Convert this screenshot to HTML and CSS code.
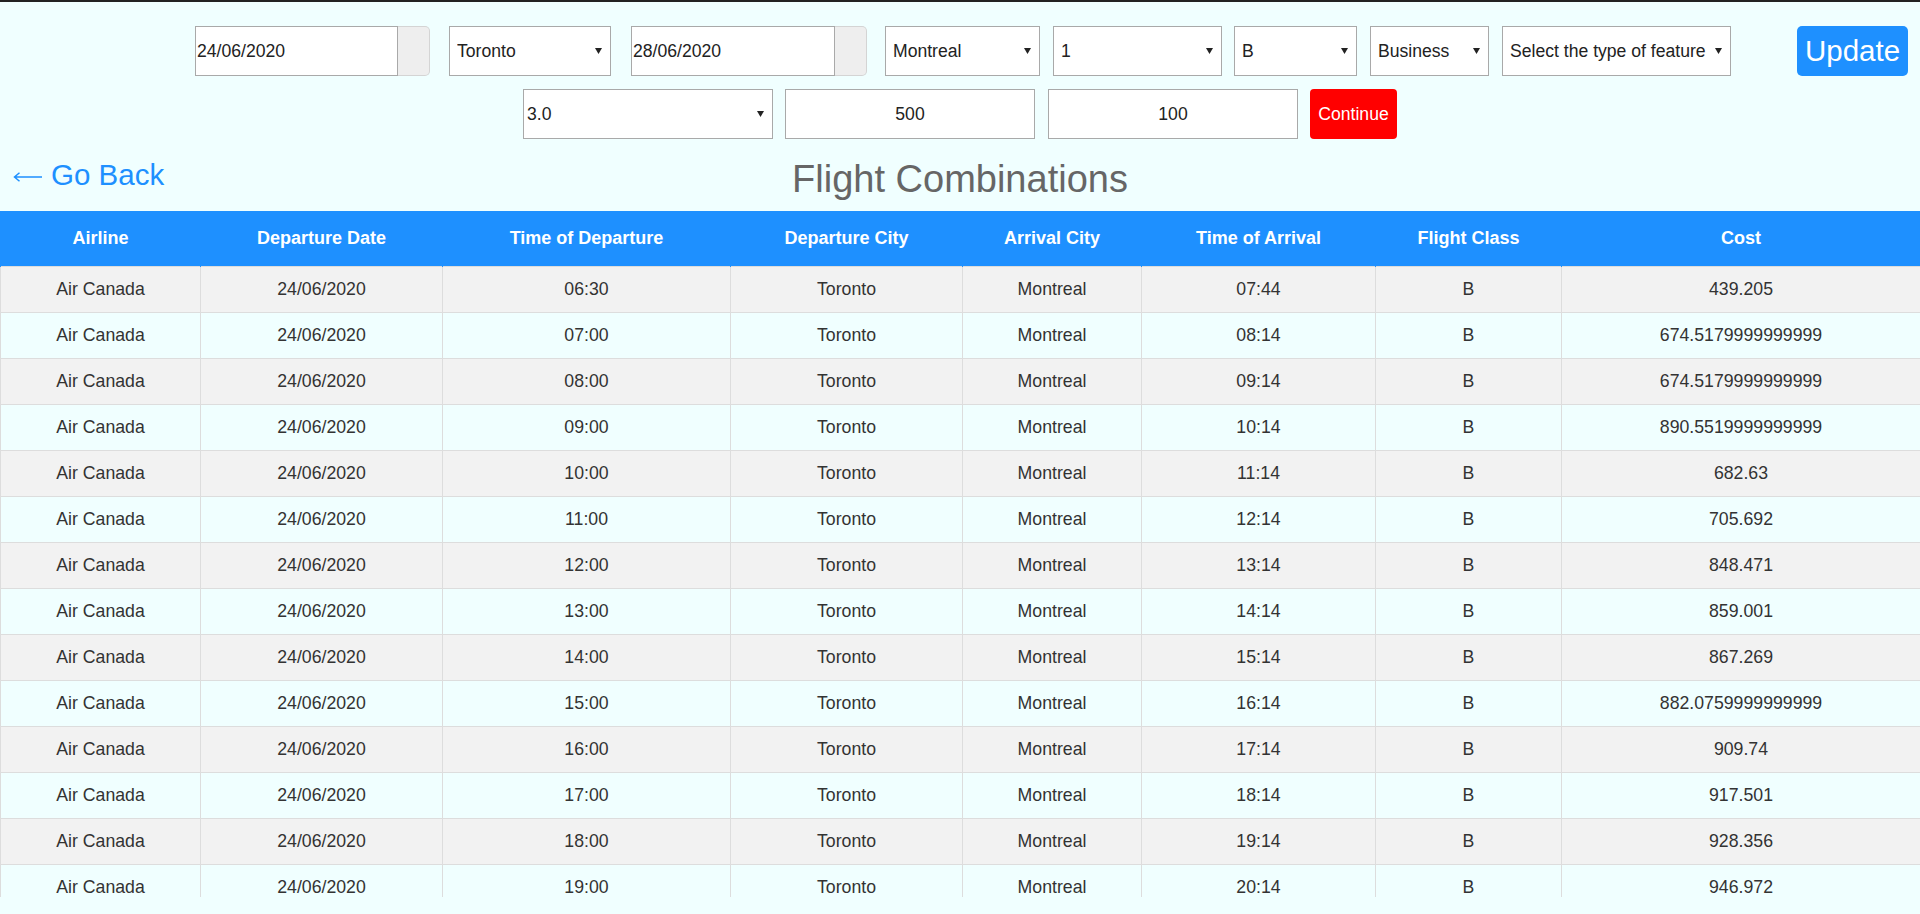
FILE: index.html
```html
<!DOCTYPE html>
<html lang="en">
<head>
<meta charset="utf-8">
<title>Flight Combinations</title>
<link rel="stylesheet" href="styles.css">
</head>
<body>
<div class="page">
  <form class="search">
    <div class="row row1">
      <div class="date-group w-date1">
        <input class="date-input" type="text" value="24/06/2020">
        <span class="addon"></span>
      </div>
      <div class="sel-wrap w-from">
        <select class="sel"><option>Toronto</option></select>
        <svg class="arrow" width="7" height="6" viewBox="0 0 7 6"><polygon points="0,0 7,0 3.5,6" fill="#222"/></svg>
      </div>
      <div class="date-group w-date2">
        <input class="date-input" type="text" value="28/06/2020">
        <span class="addon"></span>
      </div>
      <div class="sel-wrap w-to">
        <select class="sel"><option>Montreal</option></select>
        <svg class="arrow" width="7" height="6" viewBox="0 0 7 6"><polygon points="0,0 7,0 3.5,6" fill="#222"/></svg>
      </div>
      <div class="sel-wrap w-pax">
        <select class="sel"><option>1</option></select>
        <svg class="arrow" width="7" height="6" viewBox="0 0 7 6"><polygon points="0,0 7,0 3.5,6" fill="#222"/></svg>
      </div>
      <div class="sel-wrap w-code">
        <select class="sel"><option>B</option></select>
        <svg class="arrow" width="7" height="6" viewBox="0 0 7 6"><polygon points="0,0 7,0 3.5,6" fill="#222"/></svg>
      </div>
      <div class="sel-wrap w-class">
        <select class="sel"><option>Business</option></select>
        <svg class="arrow" width="7" height="6" viewBox="0 0 7 6"><polygon points="0,0 7,0 3.5,6" fill="#222"/></svg>
      </div>
      <div class="sel-wrap w-feature">
        <select class="sel"><option>Select the type of feature</option></select>
        <svg class="arrow" width="7" height="6" viewBox="0 0 7 6"><polygon points="0,0 7,0 3.5,6" fill="#222"/></svg>
      </div>
      <button class="btn-update" type="button">Update</button>
    </div>
    <div class="row row2">
      <div class="sel-wrap w-rating">
        <select class="sel sel-tight"><option>3.0</option></select>
        <svg class="arrow" width="7" height="6" viewBox="0 0 7 6"><polygon points="0,0 7,0 3.5,6" fill="#222"/></svg>
      </div>
      <input class="num-input w-num1" type="text" value="500">
      <input class="num-input w-num2" type="text" value="100">
      <button class="btn-continue" type="button">Continue</button>
    </div>
  </form>

  <div class="title-bar">
    <a class="go-back" href="#"><svg class="back-arrow" width="29" height="10" viewBox="0 0 29 10"><path d="M1.5 5 H29 M6.5 0.8 L1.5 5 L6.5 9.2" fill="none" stroke="#1e90ff" stroke-width="1.5"/></svg>Go Back</a>
    <h1 class="title">Flight Combinations</h1>
    <span class="spacer"></span>
  </div>

  <div class="table-wrap">
    <table class="flights">
      <thead>
        <tr>
          <th class="c1">Airline</th>
          <th class="c2">Departure Date</th>
          <th class="c3">Time of Departure</th>
          <th class="c4">Departure City</th>
          <th class="c5">Arrival City</th>
          <th class="c6">Time of Arrival</th>
          <th class="c7">Flight Class</th>
          <th class="c8">Cost</th>
        </tr>
      </thead>
      <tbody>
        <tr><td>Air Canada</td><td>24/06/2020</td><td>06:30</td><td>Toronto</td><td>Montreal</td><td>07:44</td><td>B</td><td>439.205</td></tr>
        <tr><td>Air Canada</td><td>24/06/2020</td><td>07:00</td><td>Toronto</td><td>Montreal</td><td>08:14</td><td>B</td><td>674.5179999999999</td></tr>
        <tr><td>Air Canada</td><td>24/06/2020</td><td>08:00</td><td>Toronto</td><td>Montreal</td><td>09:14</td><td>B</td><td>674.5179999999999</td></tr>
        <tr><td>Air Canada</td><td>24/06/2020</td><td>09:00</td><td>Toronto</td><td>Montreal</td><td>10:14</td><td>B</td><td>890.5519999999999</td></tr>
        <tr><td>Air Canada</td><td>24/06/2020</td><td>10:00</td><td>Toronto</td><td>Montreal</td><td>11:14</td><td>B</td><td>682.63</td></tr>
        <tr><td>Air Canada</td><td>24/06/2020</td><td>11:00</td><td>Toronto</td><td>Montreal</td><td>12:14</td><td>B</td><td>705.692</td></tr>
        <tr><td>Air Canada</td><td>24/06/2020</td><td>12:00</td><td>Toronto</td><td>Montreal</td><td>13:14</td><td>B</td><td>848.471</td></tr>
        <tr><td>Air Canada</td><td>24/06/2020</td><td>13:00</td><td>Toronto</td><td>Montreal</td><td>14:14</td><td>B</td><td>859.001</td></tr>
        <tr><td>Air Canada</td><td>24/06/2020</td><td>14:00</td><td>Toronto</td><td>Montreal</td><td>15:14</td><td>B</td><td>867.269</td></tr>
        <tr><td>Air Canada</td><td>24/06/2020</td><td>15:00</td><td>Toronto</td><td>Montreal</td><td>16:14</td><td>B</td><td>882.0759999999999</td></tr>
        <tr><td>Air Canada</td><td>24/06/2020</td><td>16:00</td><td>Toronto</td><td>Montreal</td><td>17:14</td><td>B</td><td>909.74</td></tr>
        <tr><td>Air Canada</td><td>24/06/2020</td><td>17:00</td><td>Toronto</td><td>Montreal</td><td>18:14</td><td>B</td><td>917.501</td></tr>
        <tr><td>Air Canada</td><td>24/06/2020</td><td>18:00</td><td>Toronto</td><td>Montreal</td><td>19:14</td><td>B</td><td>928.356</td></tr>
        <tr><td>Air Canada</td><td>24/06/2020</td><td>19:00</td><td>Toronto</td><td>Montreal</td><td>20:14</td><td>B</td><td>946.972</td></tr>
      </tbody>
    </table>
  </div>
</div>
</body>
</html>
```

FILE: styles.css
```css
* { box-sizing: border-box; }

html, body {
  margin: 0;
  padding: 0;
  height: 100%;
  overflow: hidden;
}

body {
  background: #f0ffff;
  font-family: "Liberation Sans", Arial, sans-serif;
  color: #222;
  border-top: 2px solid #222;
}

.page {
  display: flex;
  flex-direction: column;
}

.search {
  margin: 24px 0 0 0;
  display: flex;
  flex-direction: column;
  gap: 13px;
}

.row {
  display: flex;
  align-items: stretch;
  height: 50px;
}

.row1 { padding-left: 195px; }
.row2 { padding-left: 523px; }

/* date input group */
.date-group {
  display: flex;
  height: 50px;
}
.date-input {
  flex: 1;
  min-width: 0;
  height: 50px;
  border: 1px solid #a9a9a9;
  background: #fff;
  padding: 0 0 0 1px;
  font: 17.6px "Liberation Sans", Arial, sans-serif;
  color: #222;
  outline: none;
}
.addon {
  width: 32px;
  height: 50px;
  background: #eeeeee;
  border: 1px solid #d4d4d4;
  border-left: none;
  border-radius: 0 5px 5px 0;
}

/* selects */
.sel-wrap {
  position: relative;
  height: 50px;
}
.sel {
  appearance: none;
  -webkit-appearance: none;
  width: 100%;
  height: 50px;
  border: 1px solid #a9a9a9;
  border-radius: 0;
  background: #fff;
  padding: 0 20px 0 7px;
  font: 17.6px "Liberation Sans", Arial, sans-serif;
  color: #222;
  outline: none;
}
.sel-tight { padding-left: 3px; }
.arrow {
  position: absolute;
  right: 9px;
  top: 22px;
  pointer-events: none;
}

.num-input {
  height: 50px;
  border: 1px solid #a9a9a9;
  background: #fff;
  text-align: center;
  font: 17.6px "Liberation Sans", Arial, sans-serif;
  color: #222;
  padding: 0;
  outline: none;
}

/* widths & spacing (row 1) */
.w-date1 { width: 235px; }
.w-from { width: 162px; margin-left: 19px; }
.w-date2 { width: 236px; margin-left: 20px; }
.w-to { width: 155px; margin-left: 18px; }
.w-pax { width: 169px; margin-left: 13px; }
.w-code { width: 123px; margin-left: 12px; }
.w-class { width: 119px; margin-left: 13px; }
.w-feature { width: 229px; margin-left: 13px; }

/* row 2 */
.w-rating { width: 250px; }
.w-num1 { width: 250px; margin-left: 12px; }
.w-num2 { width: 250px; margin-left: 13px; }

.btn-update {
  margin-left: 66px;
  width: 111px;
  height: 50px;
  border: none;
  border-radius: 5px;
  background: #1e90ff;
  color: #fff;
  font: 29.5px "Liberation Sans", Arial, sans-serif;
  padding: 0;
  cursor: pointer;
}

.btn-continue {
  margin-left: 12px;
  width: 87px;
  height: 50px;
  border: none;
  border-radius: 4px;
  background: #ff0000;
  color: #fff;
  font: 17.6px "Liberation Sans", Arial, sans-serif;
  padding: 0;
  cursor: pointer;
}

/* title bar */
.title-bar {
  margin-top: 17px;
  height: 55px;
  display: grid;
  grid-template-columns: 1fr auto 1fr;
  align-items: start;
}
.go-back {
  padding-left: 13px;
  font-size: 29.5px;
  line-height: 37px;
  color: #1e90ff;
  text-decoration: none;
  white-space: nowrap;
}
.back-arrow {
  vertical-align: 3px;
  margin-right: 9px;
}
.title {
  margin: 0;
  font-weight: normal;
  font-size: 38px;
  line-height: 44px;
  padding-top: 1px;
  color: #666;
  white-space: nowrap;
}

/* table */
.table-wrap {
  height: 686px;
  overflow: hidden;
}
.flights {
  width: 1920px;
  border-collapse: collapse;
  table-layout: fixed;
}
.flights th {
  background: #1e90ff;
  color: #fff;
  font-weight: bold;
  font-size: 18px;
  height: 55px;
  padding: 0;
  text-align: center;
  border-left: 1px solid #1e90ff;
  border-right: 1px solid #1e90ff;
}
.flights td {
  height: 46px;
  padding: 0;
  border: 1px solid #dddddd;
  text-align: center;
  font-size: 17.7px;
  color: #333;
}
.flights tbody tr:nth-child(odd) { background: #f2f2f2; }

.c1 { width: 200px; }
.c2 { width: 242px; }
.c3 { width: 288px; }
.c4 { width: 232px; }
.c5 { width: 179px; }
.c6 { width: 234px; }
.c7 { width: 186px; }
.c8 { width: 359px; }
```
